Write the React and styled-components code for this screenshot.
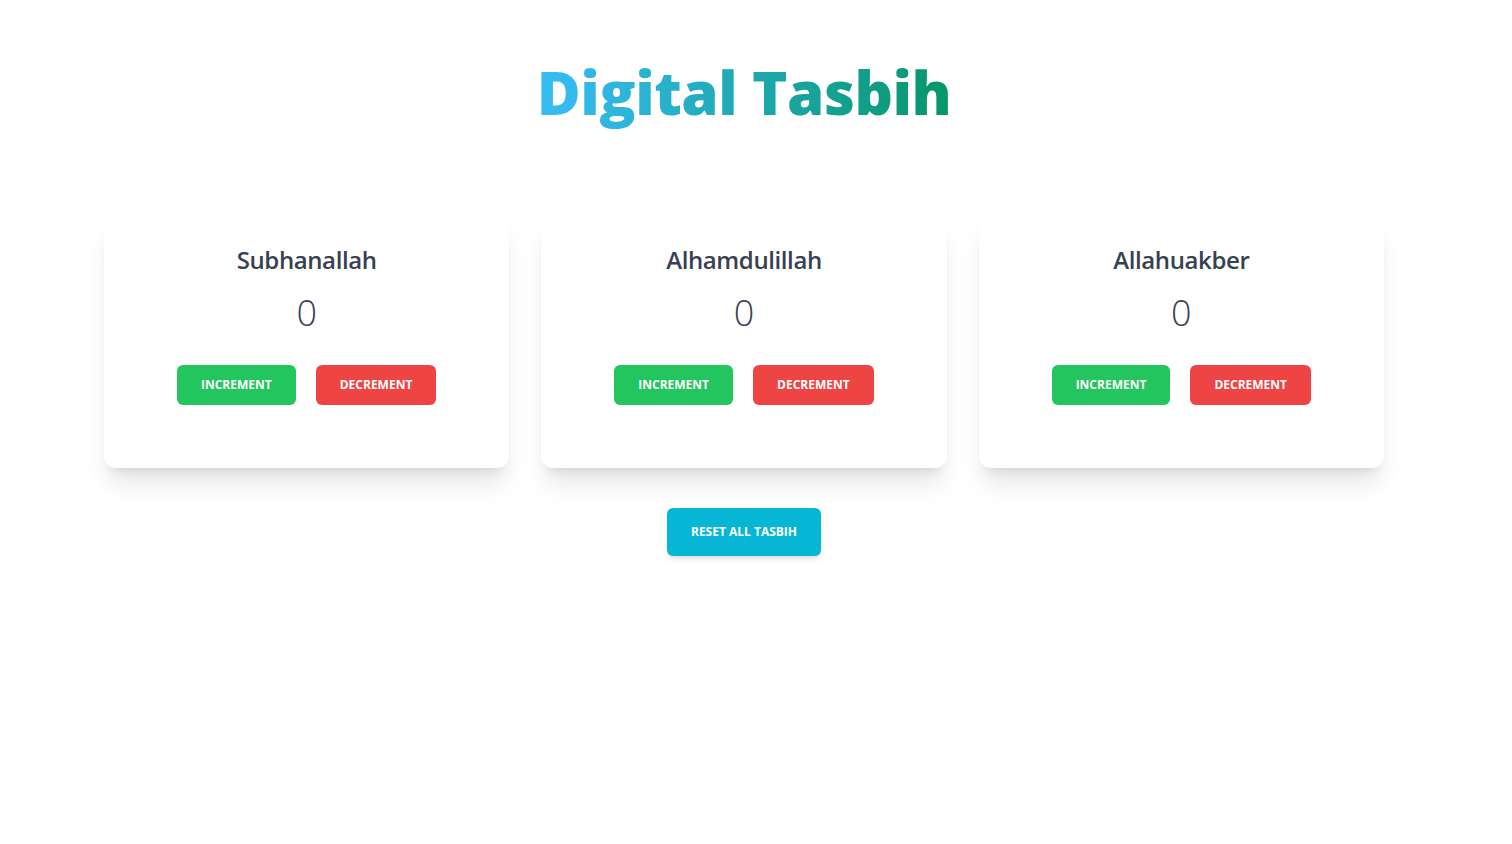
import React, { useState } from "react";
import styled, { createGlobalStyle } from "styled-components";

const Global = createGlobalStyle`
  html, body { margin: 0; padding: 0; background: #fff; }
  body { font-family: "Open Sans", "Noto Sans", sans-serif; color: #374151; }
  * { box-sizing: border-box; }
`;

const Page = styled.div`
  min-height: 844px;
  padding: 0 24px 0 0;
`;

const Main = styled.main`
  max-width: 1280px;
  margin: 0 auto;
  display: flex;
  flex-direction: column;
  align-items: center;
`;

const Title = styled.h1`
  margin: 62px 0 0;
  padding-bottom: 12px;
  font-size: 60px;
  line-height: 60px;
  font-weight: 800;
  letter-spacing: -0.5px;
  background: linear-gradient(90deg, #38bdf8, #059669);
  -webkit-background-clip: text;
  background-clip: text;
  color: transparent;
`;

const Grid = styled.div`
  width: 100%;
  margin-top: 78px;
  display: grid;
  grid-template-columns: repeat(3, 1fr);
  gap: 32px;
`;

const Card = styled.section`
  height: 256px;
  background: #fff;
  border-radius: 12px;
  padding: 32px 24px;
  box-shadow: 0 20px 25px -5px rgba(0, 0, 0, 0.1), 0 8px 10px -6px rgba(0, 0, 0, 0.1);
  display: flex;
  flex-direction: column;
  align-items: center;
`;

const Name = styled.h2`
  margin: 0;
  font-size: 24px;
  line-height: 32px;
  font-weight: 600;
  letter-spacing: -0.4px;
  color: #374151;
`;

const Count = styled.div`
  margin-top: 17px;
  font-size: 36px;
  line-height: 40px;
  font-weight: 300;
  color: #374151;
`;

const Actions = styled.div`
  margin-top: 32px;
  display: flex;
  gap: 20px;
`;

const Button = styled.button`
  border: none;
  cursor: pointer;
  font-family: inherit;
  font-size: 12px;
  line-height: 16px;
  font-weight: 700;
  text-transform: uppercase;
  color: #fff;
  background: ${(p) => p.$bg};
  padding: ${(p) => (p.$big ? "16px 24px" : "12px 24px")};
  border-radius: 6px;
  box-shadow: ${(p) => (p.$big ? "0 4px 6px -1px rgba(0,0,0,.1), 0 2px 4px -2px rgba(0,0,0,.1)" : "none")};
`;

const Reset = styled(Button)`
  margin-top: 40px;
`;

const names = ["Subhanallah", "Alhamdulillah", "Allahuakber"];

export default function App() {
  const [counts, setCounts] = useState([0, 0, 0]);
  const change = (i, d) =>
    setCounts((c) => c.map((v, j) => (j === i ? Math.max(0, v + d) : v)));
  return (
    <Page>
      <Global />
      <Main>
        <Title>Digital Tasbih</Title>
        <Grid>
          {names.map((n, i) => (
            <Card key={n}>
              <Name>{n}</Name>
              <Count>{counts[i]}</Count>
              <Actions>
                <Button $bg="#22c55e" onClick={() => change(i, 1)}>Increment</Button>
                <Button $bg="#ef4444" onClick={() => change(i, -1)}>Decrement</Button>
              </Actions>
            </Card>
          ))}
        </Grid>
        <Reset $big $bg="#06b6d4" onClick={() => setCounts([0, 0, 0])}>Reset All Tasbih</Reset>
      </Main>
    </Page>
  );
}
